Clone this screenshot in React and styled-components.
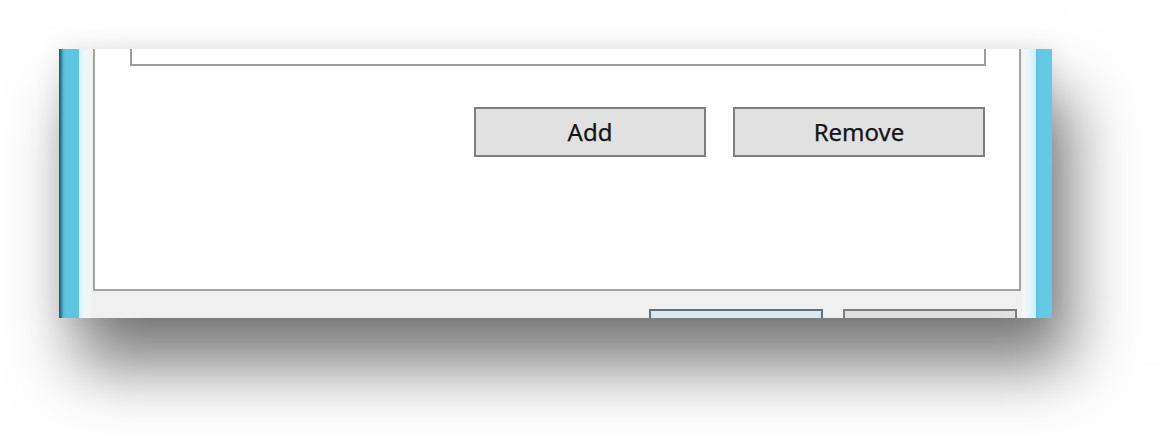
import React from "react";
import styled, { createGlobalStyle } from "styled-components";

const Global = createGlobalStyle`
  html, body { margin: 0; padding: 0; background: #ffffff; }
  body { font-family: "Noto Sans", "Open Sans", sans-serif; }
`;

const Stage = styled.div`
  width: 1174px;
  height: 435px;
  overflow: hidden;
  padding: 49px 0 0 59px;
  box-sizing: border-box;
  background: #ffffff;
`;

const Window = styled.div`
  width: 993px;
  height: 269px;
  display: flex;
  overflow: hidden;
  box-shadow: 18px 48px 62px rgba(0, 0, 0, 0.52), 0 0 24px rgba(0, 0, 0, 0.09);
`;

const LeftFrame = styled.div`
  width: 20px;
  flex: none;
  background: linear-gradient(
    to right,
    #1f5566 0,
    #2f7a90 2px,
    #4fb3d1 4px,
    #5ec4e2 6px,
    #5ec4e2 100%
  );
`;

const RightFrame = styled.div`
  width: 16px;
  flex: none;
  background: linear-gradient(to right, #57bfdc 0, #64c9e3 3px, #64c9e3 100%);
`;

const Body = styled.div`
  flex: 1;
  display: flex;
  flex-direction: column;
  padding: 0 15px 0 14px;
  background: linear-gradient(
    to right,
    #d3f2f9 0,
    #eef8fa 6px,
    #f3f4f4 11px,
    #f0f0f0 14px,
    #f0f0f0 calc(100% - 15px),
    #f4f7f8 calc(100% - 12px),
    #e6f6fa calc(100% - 7px),
    #c9eef7 100%
  );
`;

const Panel = styled.div`
  margin-top: -20px;
  height: 262px;
  flex: none;
  box-sizing: border-box;
  border: 2px solid #a4a4a4;
  background: #ffffff;
  padding-top: 7px;
  display: flex;
  flex-direction: column;
`;

const ListBox = styled.div`
  height: 28px;
  margin: 0 33px 0 35px;
  box-sizing: border-box;
  border: 2px solid #9c9c9c;
  background: #ffffff;
`;

const ButtonRow = styled.div`
  display: flex;
  justify-content: flex-end;
  gap: 27px;
  margin-top: 41px;
  padding-right: 34px;
`;

const Button = styled.button`
  width: ${(p) => p.$w}px;
  height: ${(p) => p.$h}px;
  flex: none;
  box-sizing: border-box;
  border: 2px solid ${(p) => (p.$default ? "#5f7284" : "#7e7e7e")};
  background: ${(p) => (p.$default ? "#dde7ef" : "#e1e1e1")};
  font-family: "Noto Sans", "Open Sans", sans-serif;
  font-size: 24px;
  color: #141414;
  padding: 0 0 2px;
  display: flex;
  align-items: center;
  justify-content: center;
  -webkit-text-stroke: 0.25px #141414;
`;

const Footer = styled.div`
  flex: 1;
  display: flex;
  justify-content: flex-end;
  gap: 20px;
  padding: 18px 4px 0 0;
`;

export default function App() {
  return (
    <>
      <Global />
      <Stage>
        <Window>
          <LeftFrame />
          <Body>
            <Panel>
              <ListBox />
              <ButtonRow>
                <Button $w={232} $h={50}>Add</Button>
                <Button $w={252} $h={50}>Remove</Button>
              </ButtonRow>
            </Panel>
            <Footer>
              <Button $w={174} $h={40} $default />
              <Button $w={174} $h={40} />
            </Footer>
          </Body>
          <RightFrame />
        </Window>
      </Stage>
    </>
  );
}
